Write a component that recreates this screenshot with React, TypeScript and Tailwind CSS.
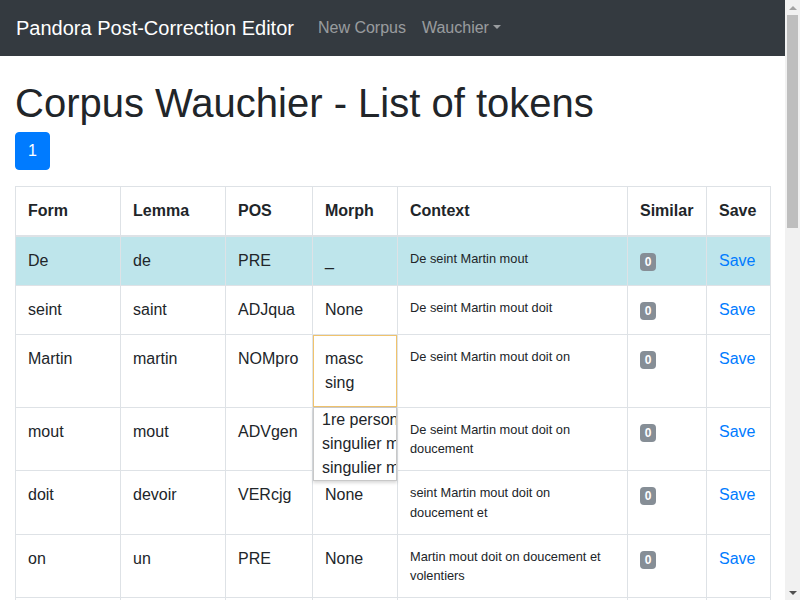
import React from "react";

type Row = { form: string; lemma: string; pos: string; morph: string };

const rows: Row[] = [
  { form: "De", lemma: "de", pos: "PRE", morph: "_" },
  { form: "seint", lemma: "saint", pos: "ADJqua", morph: "None" },
  { form: "Martin", lemma: "martin", pos: "NOMpro", morph: "masc sing" },
  { form: "mout", lemma: "mout", pos: "ADVgen", morph: "None" },
  { form: "doit", lemma: "devoir", pos: "VERcjg", morph: "None" },
  { form: "on", lemma: "un", pos: "PRE", morph: "None" },
  { form: "doucement", lemma: "doucement", pos: "ADVgen", morph: "None" },
  { form: "et", lemma: "et", pos: "CONcoo", morph: "None" },
  { form: "volentiers", lemma: "volentiers", pos: "ADVgen", morph: "None" },
  { form: "oïr", lemma: "oïr", pos: "VERinf", morph: "None" },
  { form: "parler", lemma: "parler", pos: "VERinf", morph: "None" },
];

const tokens = rows.map((r) => r.form);
const contextOf = (i: number) =>
  tokens.slice(Math.max(0, i - 3), i + 4).join(" ");

const cell = "border border-[#dee2e6] p-3 align-top";

function FakeScrollbar() {
  return (
    <div className="w-[15px] h-screen shrink-0 bg-[#f1f1f1] flex flex-col items-center">
      <div className="h-[15px] w-full flex items-center justify-center">
        <span className="block w-0 h-0 border-b-[4px] border-x-[4px] border-x-transparent border-b-[#a3a3a3]" />
      </div>
      <div className="w-[11px] h-[213px] bg-[#bebebe]" />
      <div className="flex-1" />
      <div className="h-[15px] w-full flex items-center justify-center">
        <span className="block w-0 h-0 border-t-[4px] border-x-[4px] border-x-transparent border-t-[#505050]" />
      </div>
    </div>
  );
}

export default function App() {
  return (
    <div
      className="flex h-screen overflow-hidden bg-white text-[#212529] text-base leading-6"
      style={{ fontFamily: '"Liberation Sans", Arial, sans-serif' }}
    >
      <div className="w-[785px] shrink-0 h-screen overflow-hidden">
        <nav className="flex items-center h-14 px-4 py-2 bg-[#343a40]">
          <span className="text-xl leading-[30px] py-[5px] mr-4 text-white">
            Pandora Post-Correction Editor
          </span>
          <span className="px-2 py-2 text-white/50">New Corpus</span>
          <span className="px-2 py-2 text-white/50">
            Wauchier
            <span className="inline-block w-0 h-0 ml-[0.255em] align-[0.255em] border-t-[0.3em] border-x-[0.3em] border-x-transparent border-t-current" />
          </span>
        </nav>

        <div className="px-[15px] pt-[23px]">
          <h1 className="text-[40px] leading-[48px] font-normal mb-[5px]">
            Corpus Wauchier - List of tokens
          </h1>
          <div className="flex mb-4">
            <span className="block px-3 py-2 leading-5 border border-[#007bff] bg-[#007bff] text-white rounded">
              1
            </span>
          </div>

          <table className="w-full table-fixed border-collapse border border-[#dee2e6] mb-4">
            <colgroup>
              <col className="w-[105px]" />
              <col className="w-[105px]" />
              <col className="w-[87px]" />
              <col className="w-[85px]" />
              <col className="w-[230px]" />
              <col className="w-[79px]" />
              <col className="w-[64px]" />
            </colgroup>
            <thead>
              <tr>
                {["Form", "Lemma", "POS", "Morph", "Context", "Similar", "Save"].map(
                  (h) => (
                    <th
                      key={h}
                      className="border border-[#dee2e6] border-b-2 p-3 text-left font-bold align-bottom"
                    >
                      {h}
                    </th>
                  )
                )}
              </tr>
            </thead>
            <tbody>
              {rows.map((r, i) => (
                <tr key={i} className={i === 0 ? "bg-[#bee5eb]" : ""}>
                  <td className={cell}>{r.form}</td>
                  <td className={cell}>{r.lemma}</td>
                  <td className={cell}>{r.pos}</td>
                  {i === 2 ? (
                    <td className={`${cell} relative shadow-[inset_0_0_0_1px_#f0c36d]`}>
                      {r.morph}
                      <div className="absolute left-0 right-0 top-full z-20 bg-white border border-[#c8c8c8] shadow-[0_2px_3px_rgba(0,0,0,0.15)] pl-[8px] whitespace-nowrap overflow-hidden">
                        <div>1re personne</div>
                        <div>singulier masculin</div>
                        <div>singulier masculin</div>
                      </div>
                    </td>
                  ) : (
                    <td className={cell}>{r.morph}</td>
                  )}
                  <td className={`${cell} text-[12.8px] leading-[19.2px]`}>
                    {contextOf(i)}
                  </td>
                  <td className={cell}>
                    <span className="inline-block px-[4.8px] py-[3px] text-xs leading-none font-bold text-white bg-[#868e96] rounded">
                      0
                    </span>
                  </td>
                  <td className={cell}>
                    <span className="text-[#007bff]">Save</span>
                  </td>
                </tr>
              ))}
            </tbody>
          </table>
        </div>
      </div>
      <FakeScrollbar />
    </div>
  );
}
